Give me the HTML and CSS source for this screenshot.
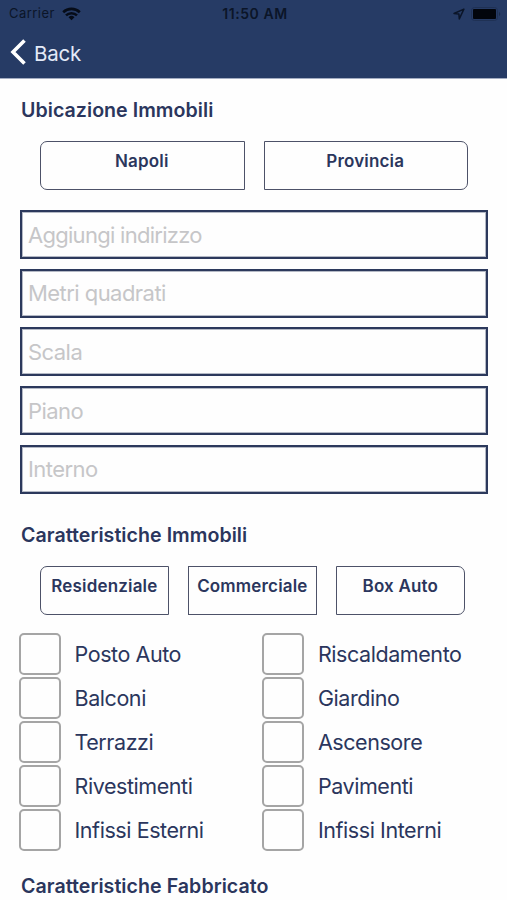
FILE: index.html
```html
<!DOCTYPE html>
<html lang="it">
<head>
    <meta charset="UTF-8">
    <meta name="viewport" content="width=device-width, initial-scale=1.0">
    <title>Immobili</title>
    <link rel="stylesheet" href="styles.css">
</head>
<body>
    <header class="navbar">
        <!-- Status bar -->
        <div class="status-bar">
            <div class="status-left">
                <span>Carrier</span>
                <svg class="wifi" width="19" height="14" viewBox="0 0 19 14" fill="none" stroke="#060c18" stroke-width="2.6">
                    <path d="M1.2 5.2a12 12 0 0 1 16.6 0"/>
                    <path d="M4 8.4a8 8 0 0 1 11 0"/>
                    <path d="M9.5 13.3l-3-3.1a4.3 4.3 0 0 1 6 0z" fill="#060c18" stroke="none"/>
                </svg>
            </div>
            <div class="status-time">11:50 AM</div>
            <div class="status-right">
                <svg width="12" height="12" viewBox="0 0 12 12" fill="none" stroke="#0b1528" stroke-width="1.5" stroke-linejoin="round">
                    <path d="M10.9 1.1L1 5.5l4.9.5.4 4.9z"/>
                </svg>
                <svg width="30" height="14" viewBox="0 0 30 14">
                    <rect x="0.5" y="0.5" width="26" height="13" rx="3" fill="none" stroke="#1f3154"/>
                    <rect x="2" y="2" width="23" height="10" rx="1" fill="#02050c"/>
                    <path d="M28 5v4a2.2 2.2 0 0 0 0-4z" fill="#1b2c4b"/>
                </svg>
            </div>
        </div>

        <div class="back-link">
            <svg width="17" height="26" viewBox="0 0 17 26" fill="none" stroke="#fff" stroke-width="3.6">
                <path d="M14.5 1.5L3 13l11.5 11.5"/>
            </svg>
            <span>Back</span>
        </div>
    </header>

    <main class="form">
        <!-- Location -->
        <h2>Ubicazione Immobili</h2>
        <div class="segments two">
            <button>Napoli</button>
            <button>Provincia</button>
        </div>

        <div class="fields">
            <input type="text" class="address" placeholder="Aggiungi indirizzo">
            <input type="text" placeholder="Metri quadrati">
            <input type="text" placeholder="Scala">
            <input type="text" placeholder="Piano">
            <input type="text" placeholder="Interno">
        </div>

        <!-- Property features -->
        <h2>Caratteristiche Immobili</h2>
        <div class="segments three">
            <button>Residenziale</button>
            <button>Commerciale</button>
            <button>Box Auto</button>
        </div>

        <div class="options">
            <label><input type="checkbox"><span>Posto Auto</span></label>
            <label><input type="checkbox"><span>Riscaldamento</span></label>
            <label><input type="checkbox"><span>Balconi</span></label>
            <label><input type="checkbox"><span>Giardino</span></label>
            <label><input type="checkbox"><span>Terrazzi</span></label>
            <label><input type="checkbox"><span>Ascensore</span></label>
            <label><input type="checkbox"><span>Rivestimenti</span></label>
            <label><input type="checkbox"><span>Pavimenti</span></label>
            <label><input type="checkbox"><span>Infissi Esterni</span></label>
            <label><input type="checkbox"><span>Infissi Interni</span></label>
        </div>

        <!-- Building features -->
        <h2>Caratteristiche Fabbricato</h2>
    </main>
</body>
</html>
```
FILE: styles.css
```css
* {
    box-sizing: border-box;
    margin: 0;
    padding: 0;
}

:root {
    --navy: #263b65;
    --text: #2b365d;
    --line: #2c395c;
}

body {
    height: 900px;
    overflow: hidden;
    background: #fefefe;
    color: var(--text);
    font-family: Inter, "Liberation Sans", sans-serif;
}

.navbar {
    height: 79px;
    background: var(--navy);
    border-bottom: 1px solid #a3adc2;
}

.status-bar {
    display: grid;
    grid-template-columns: 1fr auto 1fr;
    align-items: center;
    height: 27px;
    padding: 0 6px 0 9px;
    font-size: 13px;
    line-height: 27px;
    color: #0b1528;
}

.status-left,
.status-right {
    display: flex;
    align-items: center;
    gap: 6px;
}

.status-left {
    gap: 7px;
    letter-spacing: 0.45px;
}

.status-right {
    justify-content: flex-end;
}

.status-time {
    font-size: 14px;
    font-weight: 600;
    letter-spacing: 0.55px;
}

.back-link {
    display: flex;
    align-items: center;
    gap: 7px;
    height: 50px;
    padding-left: 10px;
    font-size: 20.5px;
    letter-spacing: -0.25px;
    color: #e3eaf8;
}

.back-link span {
    padding-top: 2px;
}

.form {
    padding: 0 20px;
}

h2 {
    height: 62px;
    padding-left: 1px;
    font-size: 19.6px;
    font-weight: 600;
    line-height: 63px;
    letter-spacing: 0.04px;
    white-space: nowrap;
}

.segments {
    display: grid;
    height: 49px;
    margin-left: 20px;
}

.segments.two {
    grid-template-columns: repeat(2, 204.5px);
    gap: 19px;
}

.segments.three {
    grid-template-columns: repeat(3, 128.7px);
    gap: 19.3px;
}

.segments button {
    padding-bottom: 9px;
    border: 1px solid #4d5268;
    background: transparent;
    color: var(--text);
    font-family: inherit;
    font-size: 17px;
    font-weight: 600;
    letter-spacing: 0.17px;
    white-space: nowrap;
}

.segments button:first-child {
    border-radius: 7px 0 0 7px;
}

.segments button:last-child {
    border-radius: 0 7px 7px 0;
}

.segments.two button {
    padding-right: 1px;
}

.fields {
    display: grid;
    gap: 9.7px;
    margin: 20px 0 10px;
}

.fields input {
    width: 467.5px;
    height: 49px;
    padding: 0 6px;
    border: 2px solid var(--line);
    box-shadow: inset 0 0 0 1px rgba(44, 57, 92, 0.35);
    background: transparent;
    font-family: inherit;
    font-size: 22px;
    letter-spacing: -0.55px;
}

.fields .address {
    letter-spacing: -0.72px;
}

.fields input::placeholder {
    color: #c6c6c8;
}

.options {
    display: grid;
    grid-template-columns: 243.4px 1fr;
    grid-auto-rows: 44px;
    margin: 17px 0 3px -1px;
}

.options label {
    display: flex;
    align-items: center;
    gap: 13.5px;
    font-size: 21.5px;
    line-height: 44px;
    letter-spacing: -0.43px;
    white-space: nowrap;
}

.options span {
    padding-top: 1px;
}

.options input {
    width: 42px;
    height: 42px;
    appearance: none;
    border: 2px solid #a5a5a5;
    border-radius: 5px;
}
```
